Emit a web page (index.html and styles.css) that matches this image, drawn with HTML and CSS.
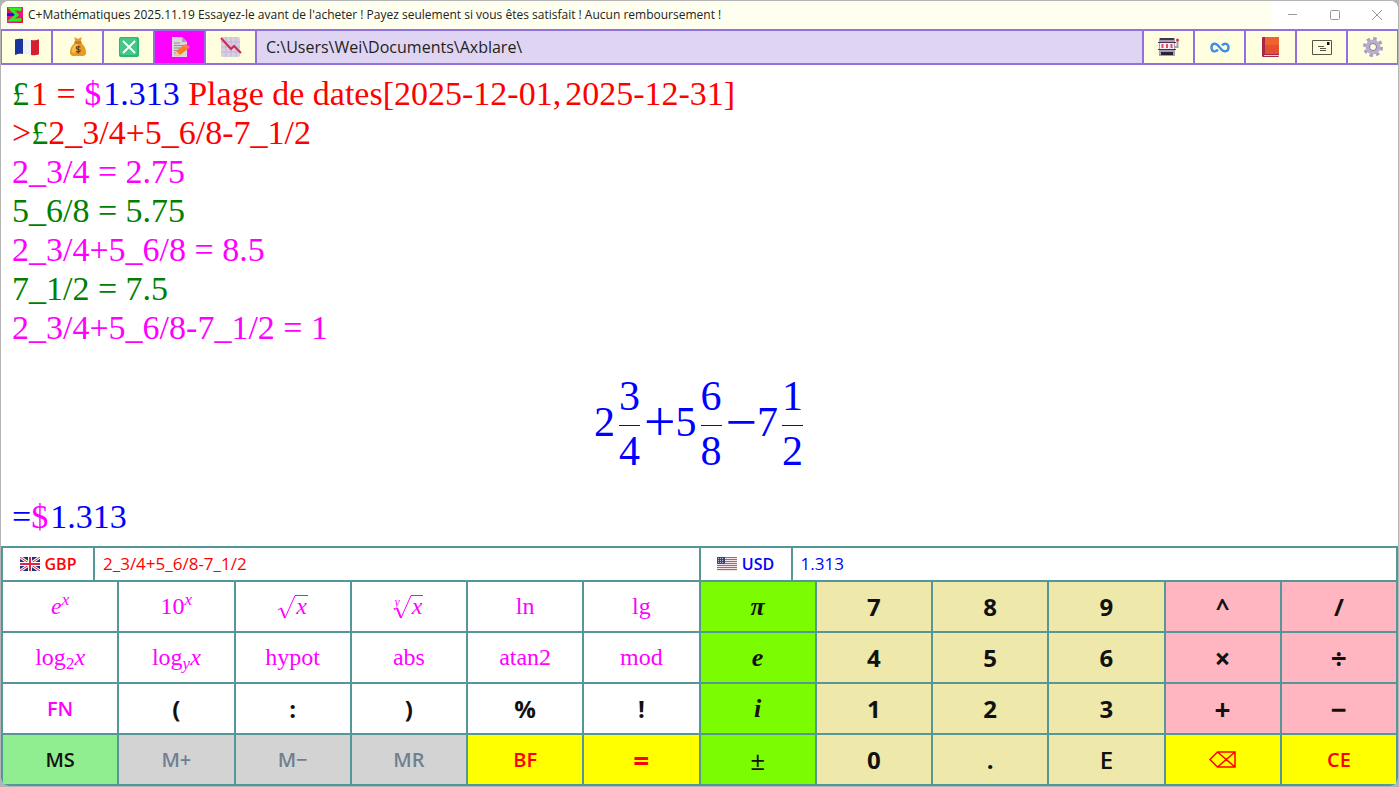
FILE: index.html
```html
<!doctype html>
<html lang="fr"><head>
	<title>C+Mathématiques</title>
	<meta charset="utf-8">
	<meta name="viewport" content="width=device-width, initial-scale=1">
	<link rel="stylesheet" href="styles.css">
</head><body>
<div class="window">
	<header class="titlebar">
		<svg class="logo" width="16" height="16" viewBox="0 0 16 16"><path fill="#f0147c" d="M0 0h16v16H0z"/><path fill="#1212f0" d="M0 6h8v3H0z"/><path fill="#e21a1a" d="M0 0h3v5H0zM12 10h4v6h-4z"/><path fill="none" stroke="#2bf01c" stroke-width="3" d="M13 4V2H4l6 6-6 5h9v-2"/></svg>
		<h1>C+Mathématiques 2025.11.19 Essayez-le avant de l'acheter ! Payez seulement si vous êtes satisfait ! Aucun remboursement !</h1>
		<div class="controls">
			<button type="button" aria-label="Réduire"><svg width="10" height="10" viewBox="0 0 10 10"><path d="M0 4.5h9"/></svg></button>
			<button type="button" aria-label="Agrandir"><svg width="10" height="10" viewBox="0 0 10 10"><rect x=".5" y=".5" width="9" height="9" rx="1"/></svg></button>
			<button type="button" aria-label="Fermer"><svg width="10" height="10" viewBox="0 0 10 10"><path d="M0 0l10 10M10 0L0 10"/></svg></button>
		</div>
	</header>

	<nav class="toolbar">
		<button type="button" aria-label="Langue">
			<svg width="24" height="18" viewBox="0 0 24 18"><path fill="#16349c" d="M0 1.500c3-1 5-1 8-.5v15c-3-.5-5 0-8 1z"/><path fill="#f1f1f5" d="M8 1l8 1v15l-8-1z"/><path fill="#d61f2c" d="M16 2c3 .5 5 .3 8-.8v15c-3 1-5 1.200-8 .8z"/></svg>
		</button>
		<button type="button" aria-label="Devise">
			<svg width="18" height="20" viewBox="0 0 20 22"><path fill="#e99a22" d="M6 0l4 2 4-2-1 6c4 3 6 7 6 11 0 3-2 4-5 4H6c-3 0-5-1-5-4C1 13 3 9 7 6z"/><path fill="#f8bd4c" d="M7 8c-3 2-4 6-4 8l2 2c3-1 5-5 5-10z"/><path fill="#b9772c" d="M6 5h8v2H6z"/><path fill="none" stroke="#60401b" stroke-width="1.300" d="M12.500 11.500c-1-1.500-4.500-1.500-4.500.5s4.500 1 4.500 3-3.500 2-4.500.5M10.300 9.500v9"/></svg>
		</button>
		<button type="button" aria-label="Calcul">
			<svg width="20" height="20" viewBox="0 0 20 20"><rect width="20" height="20" rx="2" fill="#2bb673"/><rect x="1" y="1" width="17" height="17" rx="2" fill="#42c98a"/><path stroke="#fff" stroke-width="1.800" d="M4 4l12 12M16 4L4 16"/></svg>
		</button>
		<button type="button" class="active" aria-label="Notes">
			<svg width="20" height="20" viewBox="0 0 20 20"><path fill="#dcd4df" d="M2 0h10l5 5v15H2z"/><path fill="#aaa0b5" d="M12 0v5h5z"/><path stroke="#938a9e" stroke-width="1" d="M4 6h6M4 8.500h10M4 11h10M4 13.500h6M4 16h4"/><path fill="#f58220" d="M5 19l1-5 8-6 4 4-8 6z"/><path fill="#ff6b80" d="M14 8l2-1 4 3-2 2z"/><path fill="#f8c9a0" d="M5 19l1-5 4 4z"/></svg>
		</button>
		<button type="button" aria-label="Graphique">
			<svg width="22" height="20" viewBox="0 0 22 20"><rect x="1" width="19" height="20" rx="2" fill="#d8cfe3"/><path stroke="#c2b7d2" stroke-width="1" d="M6 0v20M11 0v20M16 0v20M1 5h19M1 10h19M1 15h19"/><path fill="none" stroke="#d32752" stroke-width="2" d="M1 1l10 11 3-3 7 7"/></svg>
		</button>
		<input class="path" type="text" aria-label="Dossier" value="C:\Users\Wei\Documents\Axblare\">
		<button type="button" aria-label="Loterie">
			<svg width="22" height="18" viewBox="0 0 22 18"><path fill="#a79db3" d="M1 0h16v18H1z"/><path fill="#41364f" d="M2 0h14v2H2zM0 4h18v1H0zM0 11h18v1H0z"/><path fill="#2b2138" d="M3 14h12v3H3z"/><path fill="#f3edf7" d="M2 5h14v6H2z"/><path stroke="#e34b62" stroke-width="2" d="M4.500 6v4M9 6v4M13.500 6v4"/><path fill="none" stroke="#a79db3" stroke-width="2" d="M17 9h2.500V3"/><circle cx="19.500" cy="2" r="1.500" fill="#e12d45"/></svg>
		</button>
		<button type="button" aria-label="Infini">
			<svg width="20" height="11" viewBox="0 0 20 11"><path fill="none" stroke="#3b8eea" stroke-width="2.400" d="M8 7.500C5.500 10.500 1.500 10 1.500 5.500s4.500-5 7-1.500l3 3.500c2.500 3 7 2 7-2s-4-5-6.500-2"/></svg>
		</button>
		<button type="button" aria-label="Manuel">
			<svg width="17" height="20" viewBox="0 0 17 20"><rect width="17" height="20" rx="1" fill="#a52849"/><path fill="#ef6330" d="M3 0h14v17H3z"/><path fill="#e4502e" d="M3 8h14v9H3z"/><path fill="#e7cfdf" d="M2 18h15v1H2z"/></svg>
		</button>
		<button type="button" aria-label="Courrier">
			<svg width="20" height="16" viewBox="0 0 20 16"><path fill="none" stroke="#55554c" d="M.5 1.500h19v14H.5z"/><path fill="#111" d="M15 3h2.500v3H15z"/><path stroke="#55554c" d="M6 7.500h6M8 9.500h6M8 11.500h6"/></svg>
		</button>
		<button type="button" aria-label="Paramètres">
			<svg width="20" height="20" viewBox="0 0 20 20"><circle cx="10" cy="10" r="8.500" fill="none" stroke="#a79bc0" stroke-width="3" stroke-dasharray="3.400 3.276"/><circle cx="10" cy="10" r="5.500" fill="none" stroke="#b9aecb" stroke-width="4"/><circle cx="10" cy="10" r="3.500" fill="none" stroke="#85799c" stroke-width="1"/></svg>
		</button>
	</nav>

	<main class="output">
		<p class="red"><span class="green sign">£</span>1 = <span class="magenta sign">$</span><span class="blue">1.313</span> Plage de dates[2025-12-01,<span class="until">2025-12-31]</span></p>
		<p class="red">&gt;<span class="green">£</span>2_3/4+5_6/8-7_1/2</p>
		<p class="magenta">2_3/4 = 2.75</p>
		<p class="green">5_6/8 = 5.75</p>
		<p class="magenta">2_3/4+5_6/8 = 8.5</p>
		<p class="green">7_1/2 = 7.5</p>
		<p class="magenta">2_3/4+5_6/8-7_1/2 = 1</p>
		<div class="formula">
			<span>2</span><span class="frac"><span>3</span><span>4</span></span>
			<span class="op">+</span>
			<span>5</span><span class="frac"><span>6</span><span>8</span></span>
			<span class="op">−</span>
			<span>7</span><span class="frac"><span>1</span><span>2</span></span>
		</div>
		<p class="blue">=<span class="magenta sign">$</span>1.313</p>
	</main>

	<section class="calc">
		<div class="currencies">
			<button type="button" class="red">
				<svg width="20" height="14" viewBox="0 0 20 14"><path fill="#1d3180" d="M0 0h20v14H0z"/><path stroke="#fff" stroke-width="3" d="M0 0l20 14M20 0L0 14"/><path stroke="#d52b40" d="M0 0l20 14M20 0L0 14"/><path stroke="#fff" stroke-width="4" d="M10 0v14M0 7h20"/><path stroke="#d52b40" stroke-width="2" d="M10 0v14M0 7h20"/></svg>
				GBP
			</button>
			<input class="red" type="text" aria-label="Montant en GBP" value="2_3/4+5_6/8-7_1/2">
			<button type="button" class="blue">
				<svg width="20" height="14" viewBox="0 0 20 14"><path fill="#f5e4e8" d="M0 0h20v14H0z"/><path stroke="#cf5366" d="M0 .5h20M0 2.500h20M0 4.500h20M0 6.500h20M0 8.500h20M0 10.500h20M0 12.500h20"/><path fill="#3b4680" d="M0 0h8v7H0z"/><path stroke="#b9bfdc" stroke-dasharray="1 1" d="M1 1.500h6M1 3.500h6M1 5.500h6"/></svg>
				USD
			</button>
			<input class="blue" type="text" aria-label="Montant en USD" value="1.313">
		</div>

		<div class="keys">
			<button type="button" class="fn"><i>e</i><sup>x</sup></button>
			<button type="button" class="fn">10<sup>x</sup></button>
			<button type="button" class="fn"><svg class="root" width="18" height="26" viewBox="0 0 18 26"><path d="M1 16l3-2"/><path class="thick" d="M4 14l4 10"/><path d="M8 24L18 1.500"/></svg><i class="radicand">x</i></button>
			<button type="button" class="fn"><small>y</small><svg class="root" width="18" height="26" viewBox="0 0 18 26"><path d="M1 16l3-2"/><path class="thick" d="M4 14l4 10"/><path d="M8 24L18 1.500"/></svg><i class="radicand">x</i></button>
			<button type="button" class="fn">ln</button>
			<button type="button" class="fn">lg</button>
			<button type="button" class="const"><i>π</i></button>
			<button type="button" class="digit">7</button>
			<button type="button" class="digit">8</button>
			<button type="button" class="digit">9</button>
			<button type="button" class="oper">^</button>
			<button type="button" class="oper">/</button>

			<button type="button" class="fn">log<sub>2</sub><i>x</i></button>
			<button type="button" class="fn">log<sub><i>y</i></sub><i>x</i></button>
			<button type="button" class="fn">hypot</button>
			<button type="button" class="fn">abs</button>
			<button type="button" class="fn">atan2</button>
			<button type="button" class="fn">mod</button>
			<button type="button" class="const"><i>e</i></button>
			<button type="button" class="digit">4</button>
			<button type="button" class="digit">5</button>
			<button type="button" class="digit">6</button>
			<button type="button" class="oper large">×</button>
			<button type="button" class="oper large">÷</button>

			<button type="button" class="word toggle">FN</button>
			<button type="button">(</button>
			<button type="button">:</button>
			<button type="button">)</button>
			<button type="button">%</button>
			<button type="button">!</button>
			<button type="button" class="const"><i>i</i></button>
			<button type="button" class="digit">1</button>
			<button type="button" class="digit">2</button>
			<button type="button" class="digit">3</button>
			<button type="button" class="oper large">+</button>
			<button type="button" class="oper large">−</button>

			<button type="button" class="word store">MS</button>
			<button type="button" class="word" disabled>M+</button>
			<button type="button" class="word" disabled>M−</button>
			<button type="button" class="word" disabled>MR</button>
			<button type="button" class="word action">BF</button>
			<button type="button" class="action large">=</button>
			<button type="button" class="const sign-key">±</button>
			<button type="button" class="digit">0</button>
			<button type="button" class="digit">.</button>
			<button type="button" class="digit exp">E</button>
			<button type="button" class="action" aria-label="Effacer"><svg width="27" height="17" viewBox="0 0 27 17"><path fill="none" stroke="red" stroke-width="1.500" d="M1 8.500L8.500 1H26v15H8.500zM8.500 1L26 16M8.500 16L26 1"/></svg></button>
			<button type="button" class="word action">CE</button>
		</div>
	</section>
</div>
</body></html>
```

FILE: styles.css
```css
* {
	box-sizing: border-box;
}

body {
	margin: 0;
	padding: 1px;
	background: #b4b4b4;
	font-family: 'Open Sans', 'Noto Sans', sans-serif;
}

.window {
	display: flex;
	flex-direction: column;
	min-height: calc(100vh - 2px);
	background: white;
	border-radius: 8px;
	overflow: hidden;
}

button, input {
	margin: 0;
	padding: 0;
	border: 0;
	border-radius: 0;
	font: inherit;
	min-width: 0;
}

.red { color: red; }
.green { color: green; }
.blue { color: blue; }
.magenta { color: magenta; }

/* title bar */

.titlebar {
	display: flex;
	align-items: center;
	height: 28px;
	padding-left: 6px;
	background: ivory;
}

.titlebar h1 {
	flex: 1;
	margin: 0 0 0 5px;
	font-size: 12px;
	font-weight: normal;
	line-height: 28px;
	white-space: nowrap;
	color: #222;
}

.controls {
	display: flex;
	height: 100%;
	background: white;
}

.controls button {
	display: flex;
	align-items: center;
	justify-content: center;
	width: 42px;
	background: none;
}

.controls svg {
	fill: none;
	stroke: #999;
}

/* toolbar */

.toolbar {
	display: flex;
	gap: 2px;
	height: 36px;
	padding: 2px 1px;
	background: mediumpurple;
}

.toolbar button {
	display: flex;
	align-items: center;
	justify-content: center;
	width: 49px;
	background: lightyellow;
}

.toolbar .active {
	background: magenta;
}

.path {
	flex: 1;
	padding: 0 9px;
	background: #dfd5f3;
	color: #222;
	font-size: 16px;
}

/* results */

.output {
	flex: 1;
	padding: 9px 11px;
	font: 34px/39px 'Liberation Serif', serif;
}

.output p {
	margin: 0;
}

.sign {
	margin-right: 2px;
}

.until {
	margin-left: 4px;
}

.formula {
	display: flex;
	align-items: center;
	justify-content: center;
	height: 150px;
	padding-right: 2px;
	color: blue;
	font-size: 42px;
	line-height: 54px;
}

.frac {
	display: flex;
	flex-direction: column;
	margin-left: 4px;
}

.frac span:first-child {
	padding-bottom: 2px;
	border-bottom: 1px solid blue;
}

.frac span:last-child {
	line-height: 50px;
}

.op {
	margin-left: 4px;
	font-size: 56px;
}

/* keypad */

.calc {
	display: grid;
	gap: 2px;
	padding: 2px;
	background: #559799;
}

.currencies {
	display: grid;
	grid-template-columns: 90px 1fr 90px 1fr;
	gap: 2px;
	height: 32px;
}

.currencies button {
	display: flex;
	align-items: center;
	justify-content: center;
	gap: 5px;
	background: white;
	font-size: 16px;
	font-weight: 600;
}

.currencies input {
	padding: 0 8px 2px;
	background: white;
	font-size: 17px;
}

.keys {
	display: grid;
	grid-template-columns: repeat(12, 1fr);
	grid-auto-rows: 49px;
	gap: 2px;
}

.keys button {
	display: flex;
	align-items: center;
	justify-content: center;
	background: white;
	color: #111;
	font-size: 24px;
	font-weight: 700;
}

.keys .fn {
	color: magenta;
	font-family: 'Liberation Serif', serif;
	font-weight: normal;
}

.fn sup, .fn sub, .fn small {
	font-size: 17px;
	line-height: 16px;
}

.fn sup {
	align-self: flex-start;
	margin-top: 10px;
	font-style: italic;
}

.fn sub {
	align-self: flex-end;
	margin-bottom: 10px;
}

.fn small {
	align-self: flex-start;
	margin: 12px -7px 0 0;
	font-size: 12px;
	font-style: italic;
}

.root {
	fill: none;
	stroke: magenta;
}

.thick {
	stroke-width: 2;
}

.radicand {
	height: 24px;
	padding: 0 1px;
	border-top: 1px solid magenta;
	line-height: 20px;
}

.keys .const {
	background: lawngreen;
	font-family: 'Liberation Serif', serif;
	font-size: 26px;
}

.keys .sign-key {
	font-family: inherit;
	font-weight: normal;
}

.keys .digit {
	background: palegoldenrod;
}

.keys .exp {
	font-weight: 600;
}

.keys .oper {
	background: lightpink;
}

.keys .large {
	font-size: 28px;
}

.keys .word {
	font-size: 20px;
	font-weight: 600;
}

.keys .toggle {
	color: magenta;
}

.keys .store {
	background: lightgreen;
}

.keys .action {
	background: yellow;
	color: red;
}

.keys button:disabled {
	background: lightgray;
	color: slategray;
}
```
